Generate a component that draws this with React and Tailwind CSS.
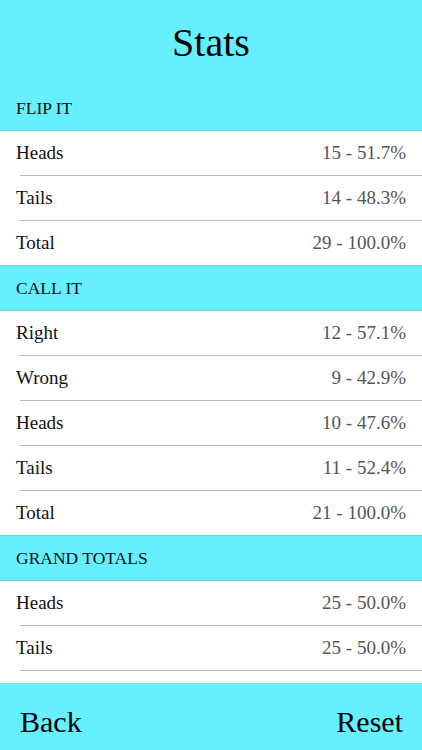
import React from "react";

const sections = [
  {
    title: "FLIP IT",
    rows: [
      ["Heads", "15 - 51.7%"],
      ["Tails", "14 - 48.3%"],
      ["Total", "29 - 100.0%"],
    ],
  },
  {
    title: "CALL IT",
    rows: [
      ["Right", "12 - 57.1%"],
      ["Wrong", "9 - 42.9%"],
      ["Heads", "10 - 47.6%"],
      ["Tails", "11 - 52.4%"],
      ["Total", "21 - 100.0%"],
    ],
  },
  {
    title: "GRAND TOTALS",
    rows: [
      ["Heads", "25 - 50.0%"],
      ["Tails", "25 - 50.0%"],
    ],
    lastDivider: true,
  },
];

export default function App() {
  return (
    <div
      className="w-[422px] h-[750px] bg-white flex flex-col overflow-hidden"
      style={{ fontFamily: '"Liberation Serif", "Times New Roman", serif' }}
    >
      <div className="h-[86px] bg-[#66effe] flex items-center justify-center shrink-0">
        <span className="text-[40px] text-black leading-none">Stats</span>
      </div>
      <div className="flex-1 flex flex-col">
        {sections.map((s, si) => (
          <div key={s.title} className="flex flex-col">
            <div
              className={
                "bg-[#66effe] flex items-center px-4 border-b border-[#7fc6ce] " +
                (si === 0 ? "h-[45px]" : "h-[46px] border-t")
              }
            >
              <span className="text-[17.5px] text-[#111]">{s.title}</span>
            </div>
            {s.rows.map(([label, value], ri) => {
              const last = ri === s.rows.length - 1;
              return (
                <div key={label + ri} className="flex flex-col">
                  <div className="h-[44px] flex items-center justify-between pl-4 pr-4">
                    <span className="text-[19px] text-[#111]">{label}</span>
                    <span className="text-[19px] text-[#555]">{value}</span>
                  </div>
                  {(!last || s.lastDivider) && (
                    <div className="ml-5 h-px bg-[#b4b4b4] opacity-90" />
                  )}
                </div>
              );
            })}
          </div>
        ))}
      </div>
      <div className="h-[67px] bg-[#66effe] flex items-center justify-between pl-5 pr-[19px] shrink-0 pt-[10px]">
        <span className="text-[30px] text-black leading-none">Back</span>
        <span className="text-[30px] text-black leading-none">Reset</span>
      </div>
    </div>
  );
}
